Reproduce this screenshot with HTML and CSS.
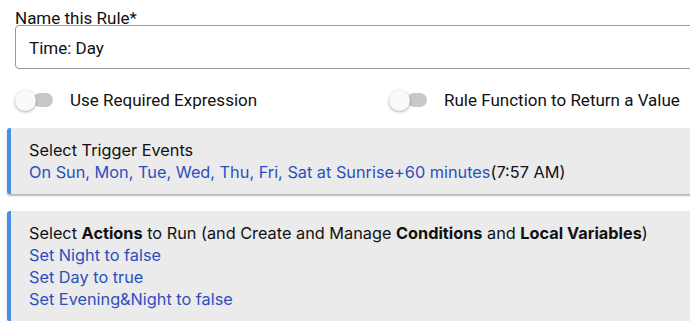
FILE: index.html
```html
<!DOCTYPE html>
<html>
<head>
<meta charset="utf-8">
<link rel="stylesheet" href="styles.css">
</head>
<body>
<div class="page">
  <div class="field">
    <label class="field-label">Name this Rule*</label>
    <div class="input">Time: Day</div>
  </div>
  <div class="switches">
    <div class="switch switch-a">
      <span class="toggle"><span class="track"></span><span class="thumb"></span></span>
      <span class="switch-label">Use Required Expression</span>
    </div>
    <div class="switch switch-b">
      <span class="toggle"><span class="track"></span><span class="thumb"></span></span>
      <span class="switch-label">Rule Function to Return a Value</span>
    </div>
  </div>
  <div class="card card-trigger">
    <div class="card-title">Select Trigger Events</div>
    <div class="line"><span class="link">On Sun, Mon, Tue, Wed, Thu, Fri, Sat at Sunrise+60 minutes</span>(7:57 AM)</div>
  </div>
  <div class="card card-actions">
    <div class="card-title">Select <b>Actions</b> to Run (and Create and Manage <b>Conditions</b> and <b>Local Variables</b>)</div>
    <div class="line link">Set Night to false</div>
    <div class="line link">Set Day to true</div>
    <div class="line link">Set Evening&amp;Night to false</div>
  </div>
</div>
</body>
</html>
```
FILE: styles.css
```css
html, body {
  margin: 0;
  padding: 0;
  background: #ffffff;
  overflow: hidden;
}
.page {
  width: 720px;
  padding: 0 0 0 7px;
}
.field {
  padding-left: 8px;
  padding-top: 8px;
  font-family: Roboto, "Liberation Sans", sans-serif;
}
.field-label {
  display: block;
  font-size: 17px;
  line-height: 20px;
  color: #111;
}
.input {
  margin-top: -3px;
  height: 42px;
  border: 1px solid #9a9a9a;
  border-radius: 4px;
  box-sizing: content-box;
  padding-left: 13px;
  font-size: 17px;
  line-height: 44px;
  color: #111;
}
.switches {
  display: flex;
  padding-left: 8px;
  margin-top: 21px;
  height: 21px;
  font-family: Roboto, "Liberation Sans", sans-serif;
  font-size: 17px;
  color: #111;
}
.switch {
  display: flex;
  align-items: center;
}
.switch-a { width: 374px; }
.toggle {
  position: relative;
  width: 38px;
  height: 21px;
  margin-right: 17px;
}
.track {
  position: absolute;
  left: 18px;
  top: 3px;
  width: 20px;
  height: 14px;
  border-radius: 7px;
  background: #c8c8c8;
}
.thumb {
  position: absolute;
  left: 0;
  top: 0;
  width: 21px;
  height: 21px;
  border-radius: 50%;
  background: #fafafa;
  box-shadow: 0 1px 3px rgba(0,0,0,0.35);
}
.switch-label {
  line-height: 21px;
}
.card {
  background: #ebebeb;
  border-left: 4px solid #4a8fe7;
  border-radius: 3px 0 0 3px;
  box-shadow: 0 2px 2px rgba(0,0,0,0.28);
  padding: 11px 0 11px 18px;
  font-family: Inter, "Liberation Sans", sans-serif;
  font-size: 16.3px;
  line-height: 22px;
  color: #111;
}
.card-trigger {
  margin-top: 17px;
}
.card-actions {
  margin-top: 17px;
}
.card-title b { font-weight: 700; }
.link {
  color: #2c4fc0;
}
```
